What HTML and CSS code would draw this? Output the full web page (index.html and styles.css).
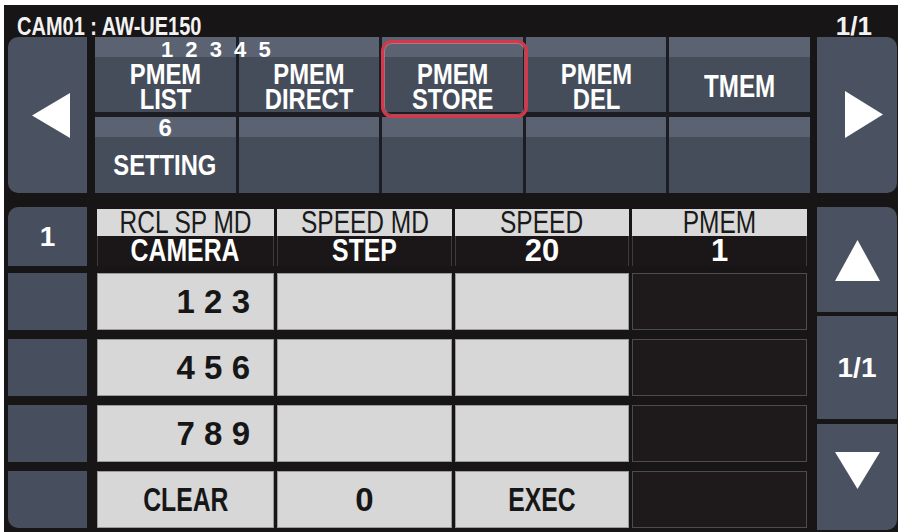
FILE: index.html
```html
<!DOCTYPE html>
<html lang="en">
<head>
<meta charset="utf-8">
<title>PMEM STORE</title>
<link rel="stylesheet" href="styles.css">
</head>
<body>
<div class="screen">
  <div class="titlebar">
    <span class="cond title">CAM01 : AW-UE150</span>
    <span class="page">1/1</span>
  </div>

  <div class="toppanel">
    <div class="navbtn nav-left">
      <svg width="38" height="45" viewBox="0 0 38 45"><polygon points="0,22.5 38,0 38,45" fill="#fff"/></svg>
    </div>
    <div class="fgrid">
      <div class="fcell top">
        <div class="strip"><span class="nums">1 2 3 4 5</span></div>
        <div class="label"><div class="lbl"><span class="ln">PMEM</span><span class="ln">LIST</span></div></div>
      </div>
      <div class="fcell top">
        <div class="strip"></div>
        <div class="label"><div class="lbl"><span class="ln">PMEM</span><span class="ln">DIRECT</span></div></div>
      </div>
      <div class="fcell top">
        <div class="strip"></div>
        <div class="label"><div class="lbl"><span class="ln">PMEM</span><span class="ln">STORE</span></div></div>
        <div class="hl"></div>
      </div>
      <div class="fcell top">
        <div class="strip"></div>
        <div class="label"><div class="lbl"><span class="ln">PMEM</span><span class="ln">DEL</span></div></div>
      </div>
      <div class="fcell top">
        <div class="strip"></div>
        <div class="label"><div class="lbl big"><span class="ln">TMEM</span></div></div>
      </div>
      <div class="fcell bottom">
        <div class="strip center"><span class="six">6</span></div>
        <div class="label"><div class="lbl"><span class="ln">SETTING</span></div></div>
      </div>
      <div class="fcell bottom"><div class="strip"></div><div class="label"></div></div>
      <div class="fcell bottom"><div class="strip"></div><div class="label"></div></div>
      <div class="fcell bottom"><div class="strip"></div><div class="label"></div></div>
      <div class="fcell bottom"><div class="strip"></div><div class="label"></div></div>
    </div>
    <div class="navbtn nav-right">
      <svg width="38" height="47" viewBox="0 0 38 47"><polygon points="38,23.5 0,0 0,47" fill="#fff"/></svg>
    </div>
  </div>

  <div class="bottompanel">
    <div class="leftcol">
      <div class="lc first">1</div>
      <div class="lc r1"></div>
      <div class="lc"></div>
      <div class="lc"></div>
      <div class="lc last"></div>
    </div>

    <div class="table">
      <div class="thead">
        <div class="th"><div class="thl"><span class="cond hd">RCL SP MD</span></div><div class="thv"><span class="cond val">CAMERA</span></div></div>
        <div class="th"><div class="thl"><span class="cond hd">SPEED MD</span></div><div class="thv"><span class="cond val">STEP</span></div></div>
        <div class="th"><div class="thl"><span class="cond hd">SPEED</span></div><div class="thv"><span class="num">20</span></div></div>
        <div class="th"><div class="thl"><span class="cond hd">PMEM</span></div><div class="thv"><span class="num">1</span></div></div>
      </div>
      <div class="trow r1">
        <div class="td light keys"><span class="digits">1 2 3</span></div>
        <div class="td light"></div>
        <div class="td light"></div>
        <div class="td dark"></div>
      </div>
      <div class="trow">
        <div class="td light keys"><span class="digits">4 5 6</span></div>
        <div class="td light"></div>
        <div class="td light"></div>
        <div class="td dark"></div>
      </div>
      <div class="trow">
        <div class="td light keys"><span class="digits">7 8 9</span></div>
        <div class="td light"></div>
        <div class="td light"></div>
        <div class="td dark"></div>
      </div>
      <div class="trow">
        <div class="td light"><span class="cond word">CLEAR</span></div>
        <div class="td light"><span class="digits">0</span></div>
        <div class="td light"><span class="cond word">EXEC</span></div>
        <div class="td dark"></div>
      </div>
    </div>

    <div class="rightcol">
      <div class="rc up">
        <svg width="45" height="41" viewBox="0 0 45 41"><polygon points="22.5,0 45,41 0,41" fill="#fff"/></svg>
      </div>
      <div class="rc mid"><span class="pg">1/1</span></div>
      <div class="rc down">
        <svg width="45" height="37" viewBox="0 0 45 37"><polygon points="0,0 45,0 22.5,37" fill="#fff"/></svg>
      </div>
    </div>
  </div>
</div>
</body>
</html>
```

FILE: styles.css
```css
* { box-sizing: border-box; }

body {
  margin: 0;
  background: #ffffff;
  font-family: "Liberation Sans", Arial, sans-serif;
}

.screen {
  margin: 5px 0 0 4px;
  width: 894px;
  height: 527px;
  background: #171515;
  overflow: hidden;
}

.cond {
  display: inline-block;
  white-space: nowrap;
  transform-origin: center;
}

/* title bar */
.titlebar {
  height: 32px;
  display: flex;
  justify-content: space-between;
  padding: 10px 26px 0 13px;
  color: #f2f2f2;
  font-weight: bold;
  line-height: 23px;
}
.title {
  font-size: 25px;
  transform: scaleX(0.8);
  transform-origin: left center;
}
.page {
  font-size: 26px;
}

/* top function panel */
.toppanel {
  display: flex;
  height: 156px;
  padding-left: 4px;
}
.navbtn {
  width: 79px;
  background: #4a5160;
  display: flex;
  align-items: center;
  justify-content: center;
}
.nav-left {
  border-radius: 10px 0 0 10px;
  padding-left: 7px;
}
.nav-right {
  width: 80px;
  margin-left: 7px;
  border-radius: 0 10px 10px 0;
  padding-left: 14px;
  padding-bottom: 2px;
}

.fgrid {
  width: 715px;
  margin-left: 8px;
  display: grid;
  grid-template-columns: repeat(5, minmax(0, 1fr));
  grid-template-rows: 75px 76px;
  column-gap: 3px;
  row-gap: 5px;
  background: #1c1d22;
}
.fcell {
  position: relative;
  display: flex;
  flex-direction: column;
  min-width: 0;
  background: #464d5a;
}
.strip {
  height: 20px;
  background: #5b6372;
  color: #fff;
  font-weight: bold;
  white-space: nowrap;
}
.strip.center {
  text-align: center;
}
.nums {
  position: relative;
  z-index: 2;
  display: inline-block;
  margin-left: 66px;
  font-size: 22px;
  line-height: 20px;
  letter-spacing: 3px;
  padding-top: 3px;
}
.six {
  display: inline-block;
  font-size: 24px;
  line-height: 20px;
  padding-top: 1px;
}
.label {
  flex: 1;
  display: flex;
  align-items: center;
  justify-content: center;
  color: #fff;
  font-weight: bold;
}
.fcell.top .label {
  padding-top: 4px;
}
.lbl {
  display: flex;
  flex-direction: column;
  align-items: center;
  font-size: 29px;
  transform: scaleX(0.82);
}
.ln {
  display: block;
  height: 25px;
  line-height: 25px;
  white-space: nowrap;
}
.lbl.big {
  font-size: 31px;
  transform: scaleX(0.78);
}

.hl {
  position: absolute;
  left: -1px;
  top: 3px;
  width: 147px;
  height: 78px;
  border: 3px solid #d8364a;
  border-radius: 11px;
  box-shadow: inset 0 0 0 1px rgba(236, 140, 150, 0.55);
  z-index: 3;
}

/* bottom panel */
.bottompanel {
  display: flex;
  height: 325px;
  margin-top: 14px;
  padding-left: 4px;
}

.leftcol {
  width: 79px;
  display: flex;
  flex-direction: column;
}
.lc {
  height: 57px;
  margin-top: 9px;
  background: #474f5e;
}
.lc.first {
  height: 59px;
  margin-top: 0;
  border-radius: 10px 0 0 0;
  display: flex;
  align-items: center;
  justify-content: center;
  color: #fff;
  font-weight: bold;
  font-size: 28px;
}
.lc.r1 {
  margin-top: 7px;
}
.lc.last {
  border-radius: 0 0 0 10px;
}

.table {
  width: 710px;
  margin-left: 10px;
  display: flex;
  flex-direction: column;
}
.thead,
.trow {
  display: grid;
  grid-template-columns: 177px 175px 174px 175px;
  column-gap: 3px;
}
.thead {
  height: 59px;
}
.th {
  display: flex;
  flex-direction: column;
}
.thl {
  height: 27px;
  margin-top: 2px;
  background: #d9d9d9;
  color: #1a1a1a;
  text-align: center;
  font-size: 31px;
  line-height: 27px;
}
.hd {
  font-weight: normal;
  vertical-align: top;
  transform: scaleX(0.79);
}
.thv {
  height: 30px;
  background: #1b1718;
  border-left: 1px solid #3e3b3c;
  border-right: 1px solid #3e3b3c;
  color: #fff;
  font-weight: bold;
  text-align: center;
  font-size: 31px;
  line-height: 30px;
}
.val {
  vertical-align: top;
  transform: scaleX(0.8);
}
.num {
  display: inline-block;
  vertical-align: top;
}

.trow {
  height: 57px;
  margin-top: 9px;
}
.trow.r1 {
  margin-top: 7px;
}
.td {
  display: flex;
  align-items: center;
  justify-content: center;
  font-weight: bold;
  font-size: 33px;
  color: #161616;
}
.td.light {
  background: #d7d7d7;
  border: 1px solid #9a9a9a;
}
.td.dark {
  background: #1e1a1b;
  border: 1px solid #4e4b4c;
}
.td.keys {
  justify-content: flex-end;
  padding-right: 23px;
}
.word {
  transform: scaleX(0.75);
}

.rightcol {
  width: 80px;
  margin-left: 10px;
  display: flex;
  flex-direction: column;
}
.rc {
  background: #4a5160;
  display: flex;
  align-items: center;
  justify-content: center;
}
.rc.up {
  height: 105px;
  border-radius: 0 10px 0 0;
  padding-top: 2px;
}
.rc.mid {
  height: 103px;
  margin-top: 4px;
  color: #fff;
  font-weight: bold;
  font-size: 28px;
}
.rc.down {
  height: 106px;
  margin-top: 5px;
  border-radius: 0 0 10px 0;
  padding-bottom: 14px;
}
```
